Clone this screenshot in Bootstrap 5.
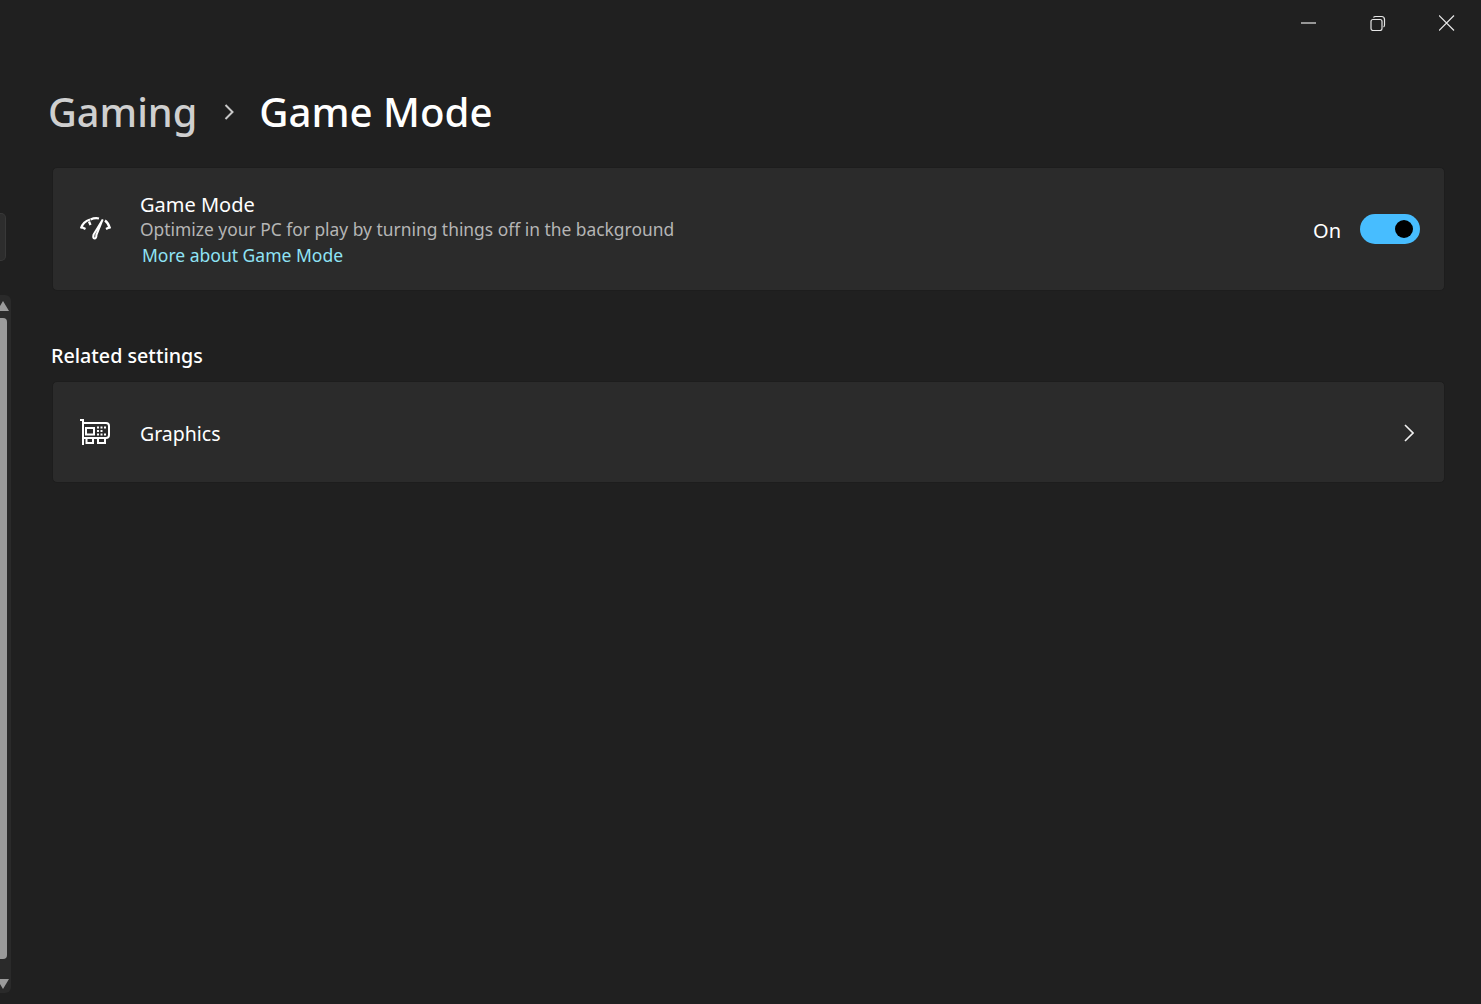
<!DOCTYPE html>
<html lang="en">
<head>
<meta charset="utf-8">
<title>Game Mode</title>
<link href="https://cdn.jsdelivr.net/npm/bootstrap@5.3.0/dist/css/bootstrap.min.css" rel="stylesheet">
<style>
html,body{height:100%;}
body{background:#202020;color:#fff;font-family:"Noto Sans","Open Sans","Liberation Sans",sans-serif;overflow:hidden;}
.app-shell{height:1004px;}
.left-rail{width:51px;flex:none;overflow:hidden;}
.nav-stub{width:6px;height:48px;margin-top:213px;background:#2d2d2d;border:1px solid #383838;border-left:0;border-radius:0 5px 5px 0;}
.scroll-track{width:11px;height:698px;margin-top:34px;background:#2a2a2a;border-radius:0 6px 6px 0;padding-top:6px;}
.arrow-up{width:0;height:0;margin-left:-3px;border-left:6px solid transparent;border-right:6px solid transparent;border-bottom:10px solid #9b9b9b;}
.scroll-thumb{width:7px;height:641px;margin-top:7px;background:#9b9b9b;border-radius:0 4px 4px 0;}
.arrow-down{width:0;height:0;margin-left:-3px;margin-top:20px;border-left:6px solid transparent;border-right:6px solid transparent;border-top:10px solid #9b9b9b;}
.content-col{padding-right:36px;min-width:0;}
.title-bar{height:46px;margin-right:-36px;}
.win-btn{width:69px;height:46px;background:transparent;border:0;padding:0;}
.win-btn svg{display:block;}
.crumbs{height:121px;padding-top:11px;margin:0;font-size:39.7px;font-weight:500;line-height:56px;}
.crumb-parent{color:#cfcfcf;margin-left:-3px;}
.crumb-sep{margin:0 25px 0 27px;}
.crumb-current{font-size:40.2px;}
.setting-card{background:#2b2b2b;border:1px solid #1d1d1d;border-radius:5px;margin-left:1px;}
.card-game{height:124px;padding:0 24px 0 27px;}
.card-graphics{height:102px;padding:0 30px 0 27px;}
.icon-slot{width:32px;flex:none;margin-right:28px;}
.icon-slot svg{display:block;}
.icon-drop{margin-top:2px;}
.row-text{padding-top:1px;}
.row-title{font-size:20px;line-height:26px;}
.row-title-small{font-size:19.5px;margin-top:3px;}
.row-desc{font-size:17.4px;line-height:25px;color:#b5b5b5;}
.row-link{font-size:17.5px;line-height:27px;color:#8fe3f5;margin-left:2px;text-decoration:none;}
.title-shift{margin-top:2px;margin-bottom:-1px;}
.state-label{font-size:20px;margin-right:19px;margin-top:4px;}
.toggle-pill{width:60px;height:30px;border-radius:15px;background:#47bdff;padding-right:7px;}
.toggle-dot{width:18px;height:18px;border-radius:50%;background:#000;}
.section-head{font-size:19.7px;font-weight:500;line-height:26px;margin:52px 0 12px;}
.chev-drop{margin-top:2px;}
</style>
</head>
<body>
<div class="app-shell d-flex">
  <div class="left-rail">
    <div class="nav-stub"></div>
    <div class="scroll-track">
      <div class="arrow-up"></div>
      <div class="scroll-thumb"></div>
      <div class="arrow-down"></div>
    </div>
  </div>
  <div class="content-col flex-grow-1">
    <div class="title-bar d-flex justify-content-end">
      <button class="win-btn d-flex align-items-center justify-content-center" aria-label="Minimize"><svg width="16" height="16" viewBox="0 0 16 16"><path d="M0 8H15" stroke="#e6e6e6" stroke-width="1.200" fill="none"/></svg></button>
      <button class="win-btn d-flex align-items-center justify-content-center" aria-label="Restore"><svg width="16" height="16" viewBox="0 0 16 16" fill="none" stroke="#e6e6e6" stroke-width="1.200"><rect x="1" y="4.500" width="11" height="11" rx="2"/><path d="M3.500 2.500Q4 1.500 5.500 1.500H11.500Q14.500 1.500 14.500 4.500V10Q14.500 11.500 13.500 12"/></svg></button>
      <button class="win-btn d-flex align-items-center justify-content-center" aria-label="Close"><svg width="16" height="16" viewBox="0 0 16 16"><path d="M0 0.500L15 15.500M15 0.500L0 15.500" stroke="#e6e6e6" stroke-width="1.200" fill="none"/></svg></button>
    </div>
    <h1 class="crumbs d-flex align-items-center align-self-start">
      <span class="crumb-parent">Gaming</span>
      <svg class="crumb-sep" width="10" height="18" viewBox="0 0 10 18"><path d="M1.500 2L8.500 9L1.500 16" stroke="#c8c8c8" stroke-width="2" fill="none"/></svg>
      <span class="crumb-current">Game Mode</span>
    </h1>
    <div class="setting-card card-game d-flex align-items-center">
      <div class="icon-slot">
        <svg width="32" height="32" viewBox="0 0 32 32" fill="none" stroke="#fff" stroke-width="2.300"><path d="M1 15.500Q3 8.500 10 6.500M10.500 6.500Q15 4.500 19 5.500M25 7.500Q28.500 10 30 15.500"/><path d="M9 8.500L10.500 12M1.500 14L5.500 16M30 14L26 16"/><path d="M22.700 6.500L13.500 21.500Q12.500 25.500 14.500 25.500Q16.500 25.500 16.500 22Z" stroke-width="1.900" fill="#fff" fill-opacity=".35"/></svg>
      </div>
      <div class="row-text flex-grow-1">
        <div class="row-title title-shift">Game Mode</div>
        <div class="row-desc">Optimize your PC for play by turning things off in the background</div>
        <a class="row-link d-inline-block" href="#">More about Game Mode</a>
      </div>
      <span class="state-label">On</span>
      <div class="toggle-pill d-flex align-items-center justify-content-end"><div class="toggle-dot"></div></div>
    </div>
    <div class="section-head">Related settings</div>
    <div class="setting-card card-graphics d-flex align-items-center">
      <div class="icon-slot icon-drop">
        <svg width="32" height="30" viewBox="0 0 32 30" fill="none" stroke="#fff" stroke-width="2"><path d="M0 2H3V27"/><path d="M3 5H26Q29 5 29 8V17Q29 20 26 20H3"/><rect x="6" y="10" width="8" height="6.500"/><path d="M6.500 20V25H13V20M18 20V25H25V20"/><path d="M17 9.500H27M17 13H23M17 16.500H27" stroke-dasharray="2 1.500"/></svg>
      </div>
      <div class="row-title row-title-small flex-grow-1">Graphics</div>
      <svg class="chev-drop" width="10" height="18" viewBox="0 0 10 18"><path d="M1 1L9 9L1 17" stroke="#f0f0f0" stroke-width="1.600" fill="none"/></svg>
    </div>
  </div>
</div>
<script src="https://cdn.jsdelivr.net/npm/bootstrap@5.3.0/dist/js/bootstrap.bundle.min.js"></script>
</body>
</html>
